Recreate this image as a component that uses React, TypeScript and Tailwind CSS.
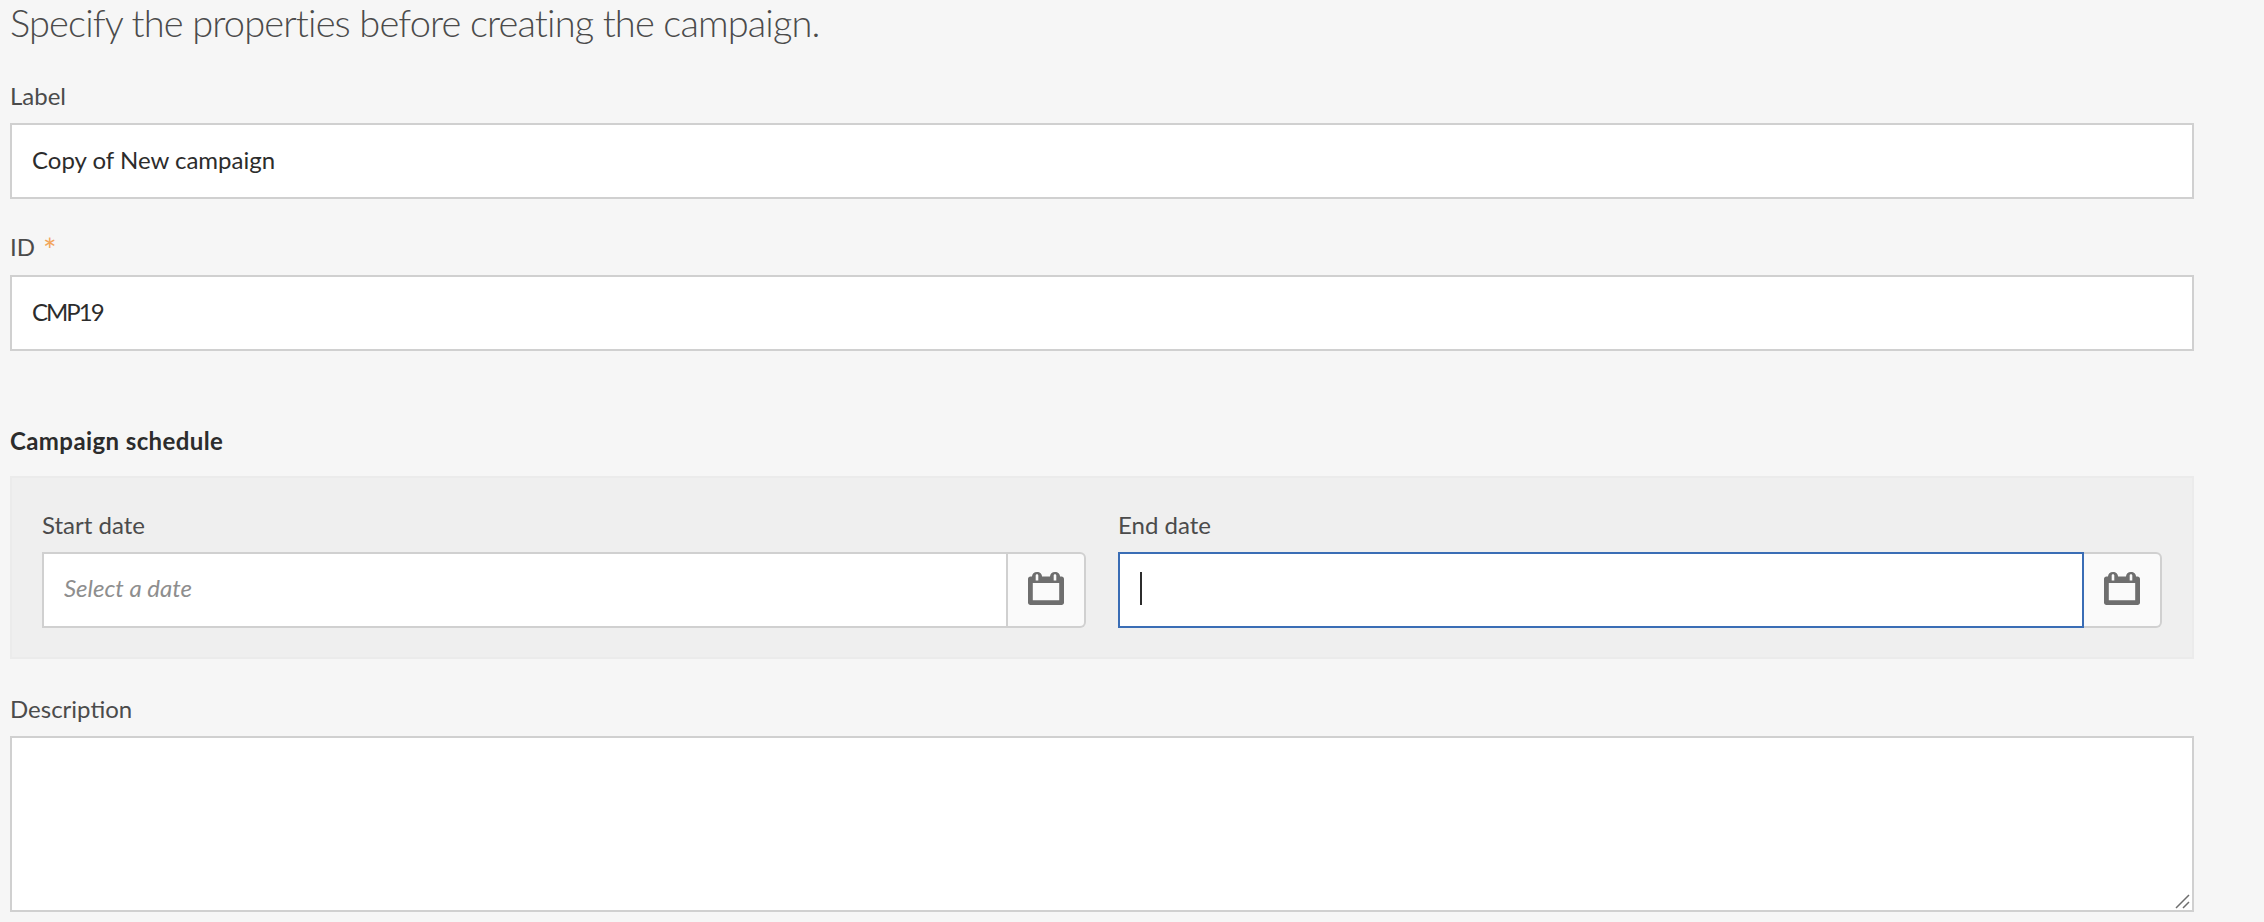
import React from 'react';

const font = { fontFamily: '"Lato", "Noto Sans", sans-serif' };

function CalendarIcon() {
  return (
    <svg width="36" height="33" viewBox="0 0 36 33" className="mb-[3px] text-[#6e6e6e]">
      <path
        fill="currentColor"
        fillRule="evenodd"
        d="M4 4.5C4 2 6 0 9 0s5 2 5 4.5h8C22 2 24 0 27 0s5 2 5 4.5h1.5C35 4.5 36 5.5 36 7v23.5c0 1.5-1 2.5-2.5 2.5h-31C1 33 0 32 0 30.5V7c0-1.5 1-2.5 2.5-2.5H4zM7.7 3.5v5h2.6v-5c0-.7-.6-1.2-1.3-1.2s-1.3.5-1.3 1.2zm18 0v5h2.6v-5c0-.7-.6-1.2-1.3-1.2s-1.3.5-1.3 1.2zM4.8 11v17.2h26.4V11H4.8z"
      />
    </svg>
  );
}

function FieldLabel({ children }: { children: React.ReactNode }) {
  return <div className="mb-[10px] h-8 text-[24px] leading-[30px] text-[#4b4b4b]">{children}</div>;
}

function DateField({ label, focused }: { label: string; focused?: boolean }) {
  return (
    <div>
      <div className="mb-[11px] h-8 text-[24px] leading-8 text-[#4b4b4b]">{label}</div>
      <div className="flex h-[76px]">
        {focused ? (
          <div className="flex flex-1 items-center border-2 border-[#3a6db5] bg-white pb-[3px] pl-5">
            <div className="h-[33px] w-[2px] bg-[#2c2c2c]" />
          </div>
        ) : (
          <input
            readOnly
            placeholder="Select a date"
            style={font}
            className="min-w-0 flex-1 border-2 border-[#d0d0d0] bg-white pb-[4px] pl-5 text-[24px] italic text-[#2c2c2c] outline-none placeholder:text-[#8e8e8e]"
          />
        )}
        <button className="flex w-[78px] items-center justify-center rounded-r-md border-2 border-l-0 border-[#d0d0d0] bg-[#fafafa]">
          <CalendarIcon />
        </button>
      </div>
    </div>
  );
}

export default function App() {
  return (
    <div style={font} className="h-[922px] w-full overflow-hidden bg-[#f6f6f6] pl-[10px]">
      <div className="w-[2184px]">
        <h1 className="h-[50px] text-[38px] leading-[44px] font-light tracking-[-0.85px] text-[#4b4b4b]">
          Specify the properties before creating the campaign.
        </h1>

        <div className="mt-[31px]">
          <FieldLabel>Label</FieldLabel>
          <input
            readOnly
            value="Copy of New campaign"
            style={font}
            className="block h-[76px] w-full border-2 border-[#d0d0d0] bg-white pb-[4px] pl-5 text-[24px] text-[#2c2c2c] outline-none"
          />
        </div>

        <div className="mt-[33px]">
          <FieldLabel>
            ID
            <span className="ml-[8px] align-[-6px] text-[32px] leading-none text-[#f2a55a]">*</span>
          </FieldLabel>
          <div className="pt-[1px]">
            <input
              readOnly
              value="CMP19"
              style={font}
              className="block h-[76px] w-full border-2 border-[#d0d0d0] bg-white pb-[4px] pl-5 text-[24px] tracking-[-2px] text-[#2c2c2c] outline-none"
            />
          </div>
        </div>

        <h2 className="mt-[74px] mb-[19px] h-8 text-[24px] leading-8 font-bold tracking-[0.4px] text-[#2c2c2c]">
          Campaign schedule
        </h2>

        {/* Dates */}
        <div className="grid h-[183px] grid-cols-2 gap-[32px] border-2 border-[#ebebeb] bg-[#efefef] px-[30px] pt-[31px]">
          <DateField label="Start date" />
          <DateField label="End date" focused />
        </div>

        <div className="mt-[35px]">
          <FieldLabel>Description</FieldLabel>
          <div className="relative">
            <textarea
              readOnly
              style={font}
              className="block h-[176px] w-full resize-none border-2 border-[#d0d0d0] bg-white outline-none"
            />
            {/* resize grip */}
            <svg width="16" height="16" viewBox="0 0 16 16" className="absolute right-[3px] bottom-[3px]">
              <path d="M1 15 14 2M8 15l6-6" stroke="#6e6e6e" strokeWidth="1.5" fill="none" />
            </svg>
          </div>
        </div>
      </div>
    </div>
  );
}
